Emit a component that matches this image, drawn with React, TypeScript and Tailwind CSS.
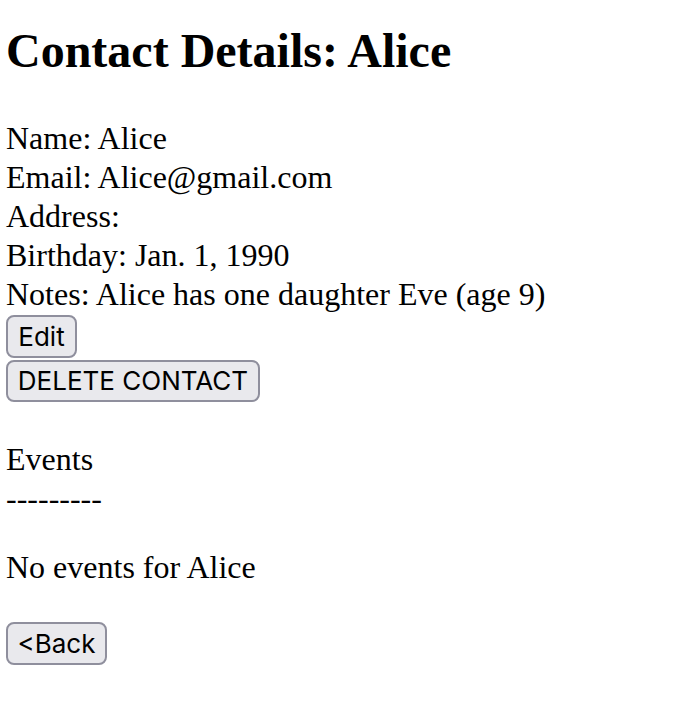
import React from "react";

const btn =
  "flex items-center justify-center rounded-[8px] border-2 border-[#8f8f9d] bg-[#e9e9ed] text-[26px] leading-none text-black font-['Inter','Liberation_Sans',sans-serif]";

export default function App() {
  return (
    <div className="min-h-[706px] bg-white px-[6px] text-black font-['Liberation_Serif','Times_New_Roman',serif]">
      <h2 className="mt-[23px] mb-[41px] text-[48px] font-bold leading-[55px]">
        Contact Details: Alice
      </h2>
      <div className="text-[32px] leading-[39px]">
        <div>Name: Alice</div>
        <div>Email: Alice@gmail.com</div>
        <div>Address:</div>
        <div>Birthday: Jan. 1, 1990</div>
        <div>Notes: Alice has one daughter Eve (age 9)</div>
      </div>
      <button className={`${btn} mt-[1px] h-[43px] w-[71px]`}>Edit</button>
      <button className={`${btn} mt-[2px] h-[42px] w-[254px]`}>DELETE CONTACT</button>
      <div className="mt-[38px] text-[32px] leading-[39px]">
        <div>Events</div>
        <div>---------</div>
      </div>
      <div className="mt-[30px] text-[32px] leading-[39px]">No events for Alice</div>
      <button className={`${btn} mt-[35px] h-[43px] w-[101px]`}>&lt;Back</button>
    </div>
  );
}
